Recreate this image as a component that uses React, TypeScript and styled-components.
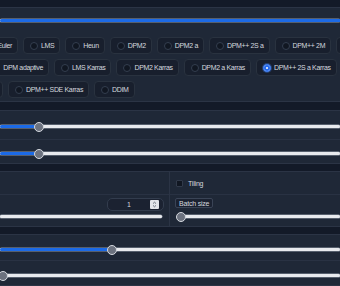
import styled, { createGlobalStyle } from 'styled-components';

const GlobalStyle = createGlobalStyle`
  html, body {
    margin: 0;
    padding: 0;
    background: #131a28;
  }
  body {
    font-family: "Liberation Sans", Arial, sans-serif;
    overflow: hidden;
  }
`;

const Page = styled.div`
  width: 340px;
  height: 286px;
  overflow: hidden;
  display: flex;
  flex-direction: column;
  background: #131a28;
`;

const Band = styled.div<{ $h: number }>`
  flex: none;
  height: ${(p) => p.$h}px;
`;

const Panel = styled.div`
  flex: none;
  background: #1f2837;
  border-top: 1px solid #2b3445;
  border-bottom: 1px solid #2b3445;
`;

const SamplerPanel = styled(Panel)`
  padding: 11px 0 3px;
  display: flex;
  flex-direction: column;
`;

const ChoiceRows = styled.div`
  margin-top: 15px;
  display: flex;
  flex-direction: column;
  gap: 5px;
`;

const ChoiceRow = styled.div<{ $shift: number }>`
  display: flex;
  flex-wrap: nowrap;
  gap: 5px;
  margin-left: ${(p) => p.$shift}px;
`;

const Choice = styled.label<{ $w?: number }>`
  flex: none;
  box-sizing: border-box;
  display: flex;
  align-items: center;
  justify-content: ${(p) => (p.$w ? 'flex-end' : 'flex-start')};
  gap: 3px;
  height: 17px;
  width: ${(p) => (p.$w ? `${p.$w}px` : 'auto')};
  padding: 0 5px 0 6px;
  background: #181f2d;
  border: 1px solid #29323f;
  border-radius: 4px;
  font-size: 7px;
  letter-spacing: -0.35px;
  color: #d4d8df;
  white-space: nowrap;
`;

const Dot = styled.span<{ $on?: boolean }>`
  flex: none;
  box-sizing: border-box;
  width: 8px;
  height: 8px;
  border-radius: 50%;
  background: ${(p) => (p.$on ? '#ffffff' : '#111722')};
  border: 1px solid ${(p) => (p.$on ? '#2f74f0' : '#343e4f')};
  box-shadow: ${(p) =>
    p.$on ? 'inset 0 0 0 2px #2468ea, 0 0 0 1px rgba(64,128,246,0.35)' : 'none'};
`;

const SliderBlock = styled.div<{ $h: number; $y: number; $pl?: number; $pr?: number }>`
  box-sizing: border-box;
  height: ${(p) => p.$h}px;
  padding: ${(p) => p.$y - 1}px ${(p) => p.$pr ?? 0}px 0 ${(p) => p.$pl ?? 0}px;
  & + & {
    border-top: 1px solid #293243;
  }
`;

const Track = styled.div`
  position: relative;
  height: 3px;
  background: #e8eaee;
  border-radius: 2px;
  box-shadow: 0 0 0 0.5px #8d95a3;
`;

const Fill = styled.div`
  position: absolute;
  left: 0;
  top: 0;
  bottom: 0;
  background: #1c6ae6;
  border-radius: 2px 0 0 2px;
`;

const Thumb = styled.div`
  position: absolute;
  top: 50%;
  width: 10px;
  height: 10px;
  box-sizing: border-box;
  transform: translate(-50%, -50%);
  border-radius: 50%;
  background: #6c727f;
  border: 1.5px solid #d5d9df;
`;

const Split = styled(Panel)`
  display: flex;
  height: 54px;
`;

const Column = styled.div<{ $w?: number }>`
  display: flex;
  flex-direction: column;
  width: ${(p) => (p.$w ? `${p.$w}px` : 'auto')};
  flex: ${(p) => (p.$w ? 'none' : '1')};
  & + & {
    border-left: 1px solid #2b3445;
  }
`;

const Cell = styled.div<{ $h: number }>`
  box-sizing: border-box;
  height: ${(p) => p.$h}px;
  & + & {
    border-top: 1px solid #293243;
  }
`;

const CheckCell = styled(Cell)`
  display: flex;
  align-items: center;
  gap: 5px;
  padding-left: 6px;
  font-size: 7px;
  letter-spacing: -0.2px;
  color: #d4d8df;
`;

const Box = styled.span`
  width: 7px;
  height: 7px;
  box-sizing: border-box;
  background: #111722;
  border: 1px solid #313a4a;
  border-radius: 1px;
`;

const FieldHead = styled.div<{ $end?: boolean }>`
  display: flex;
  justify-content: ${(p) => (p.$end ? 'flex-end' : 'flex-start')};
  padding: 3px 5px 0;
  height: 13px;
`;

const NumberBox = styled.div`
  box-sizing: border-box;
  width: 57px;
  height: 13px;
  display: flex;
  align-items: center;
  padding: 0 4px 0 0;
  background: #1b2231;
  border: 1px solid #323c4d;
  border-radius: 5px;
  font-size: 7px;
  color: #d3d7de;
`;

const NumberValue = styled.span`
  flex: 1;
  text-align: center;
`;

const Spinner = styled.span`
  display: flex;
  align-items: center;
  justify-content: center;
  width: 9px;
  height: 9px;
  background: #e2e5ea;
  border-radius: 1px;
`;

const Tag = styled.span`
  box-sizing: border-box;
  height: 10px;
  padding: 0 3px;
  display: inline-flex;
  align-items: center;
  border: 1px solid #3a4456;
  border-radius: 2px;
  background: #1b2231;
  font-size: 7px;
  letter-spacing: -0.2px;
  color: #d4d8df;
`;

function Slider({ pos, thumb = true }: { pos: number; thumb?: boolean }) {
  return (
    <Track>
      {pos > 0 && <Fill style={{ width: `${pos}%` }} />}
      {thumb && <Thumb style={{ left: `${pos}%` }} />}
    </Track>
  );
}

const rows = [
  { shift: -42, partial: 'Euler', w: 60, items: ['LMS', 'Heun', 'DPM2', 'DPM2 a', 'DPM++ 2S a', 'DPM++ 2M', 'DPM++ SDE'] },
  { shift: -21, partial: 'DPM adaptive', w: 70, items: ['LMS Karras', 'DPM2 Karras', 'DPM2 a Karras', 'DPM++ 2S a Karras', 'DPM++ 2M Karras'] },
  { shift: -57, partial: 'DPM++ 2M Karras', w: 60, items: ['DPM++ SDE Karras', 'DDIM'] },
];

const selected = 'DPM++ 2S a Karras';

export default function App() {
  return (
    <Page>
      <GlobalStyle />
      <Band $h={7} />
      <SamplerPanel>
        <Slider pos={100} thumb={false} />
        <ChoiceRows>
          {rows.map((row) => (
            <ChoiceRow key={row.partial} $shift={row.shift}>
              <Choice $w={row.w}>
                <Dot />
                {row.partial}
              </Choice>
              {row.items.map((name) => (
                <Choice key={name}>
                  <Dot $on={name === selected} />
                  {name}
                </Choice>
              ))}
            </ChoiceRow>
          ))}
        </ChoiceRows>
      </SamplerPanel>
      <Band $h={8} />
      <Panel>
        <SliderBlock $h={28} $y={15}>
          <Slider pos={11.5} />
        </SliderBlock>
        <SliderBlock $h={24} $y={13}>
          <Slider pos={11.5} />
        </SliderBlock>
      </Panel>
      <Band $h={7} />
      <Split>
        <Column $w={169}>
          <Cell $h={22} />
          <Cell $h={32}>
            <FieldHead $end>
              <NumberBox>
                <NumberValue>1</NumberValue>
                <Spinner>
                  <svg width="5" height="7" viewBox="0 0 5 7">
                    <path d="M1 2.6 L2.5 1.2 L4 2.6 M1 4.4 L2.5 5.8 L4 4.4" fill="none" stroke="#4b5563" strokeWidth="0.8" />
                  </svg>
                </Spinner>
              </NumberBox>
            </FieldHead>
            <SliderBlock $h={18} $y={5} $pr={7}>
              <Slider pos={0} thumb={false} />
            </SliderBlock>
          </Cell>
        </Column>
        <Column>
          <CheckCell $h={22}>
            <Box />
            Tiling
          </CheckCell>
          <Cell $h={32}>
            <FieldHead>
              <Tag>Batch size</Tag>
            </FieldHead>
            <SliderBlock $h={18} $y={5} $pl={11}>
              <Slider pos={0} />
            </SliderBlock>
          </Cell>
        </Column>
      </Split>
      <Band $h={7} />
      <Panel>
        <SliderBlock $h={25} $y={14}>
          <Slider pos={33} />
        </SliderBlock>
        <SliderBlock $h={25} $y={14}>
          <Slider pos={0.9} />
        </SliderBlock>
      </Panel>
    </Page>
  );
}
